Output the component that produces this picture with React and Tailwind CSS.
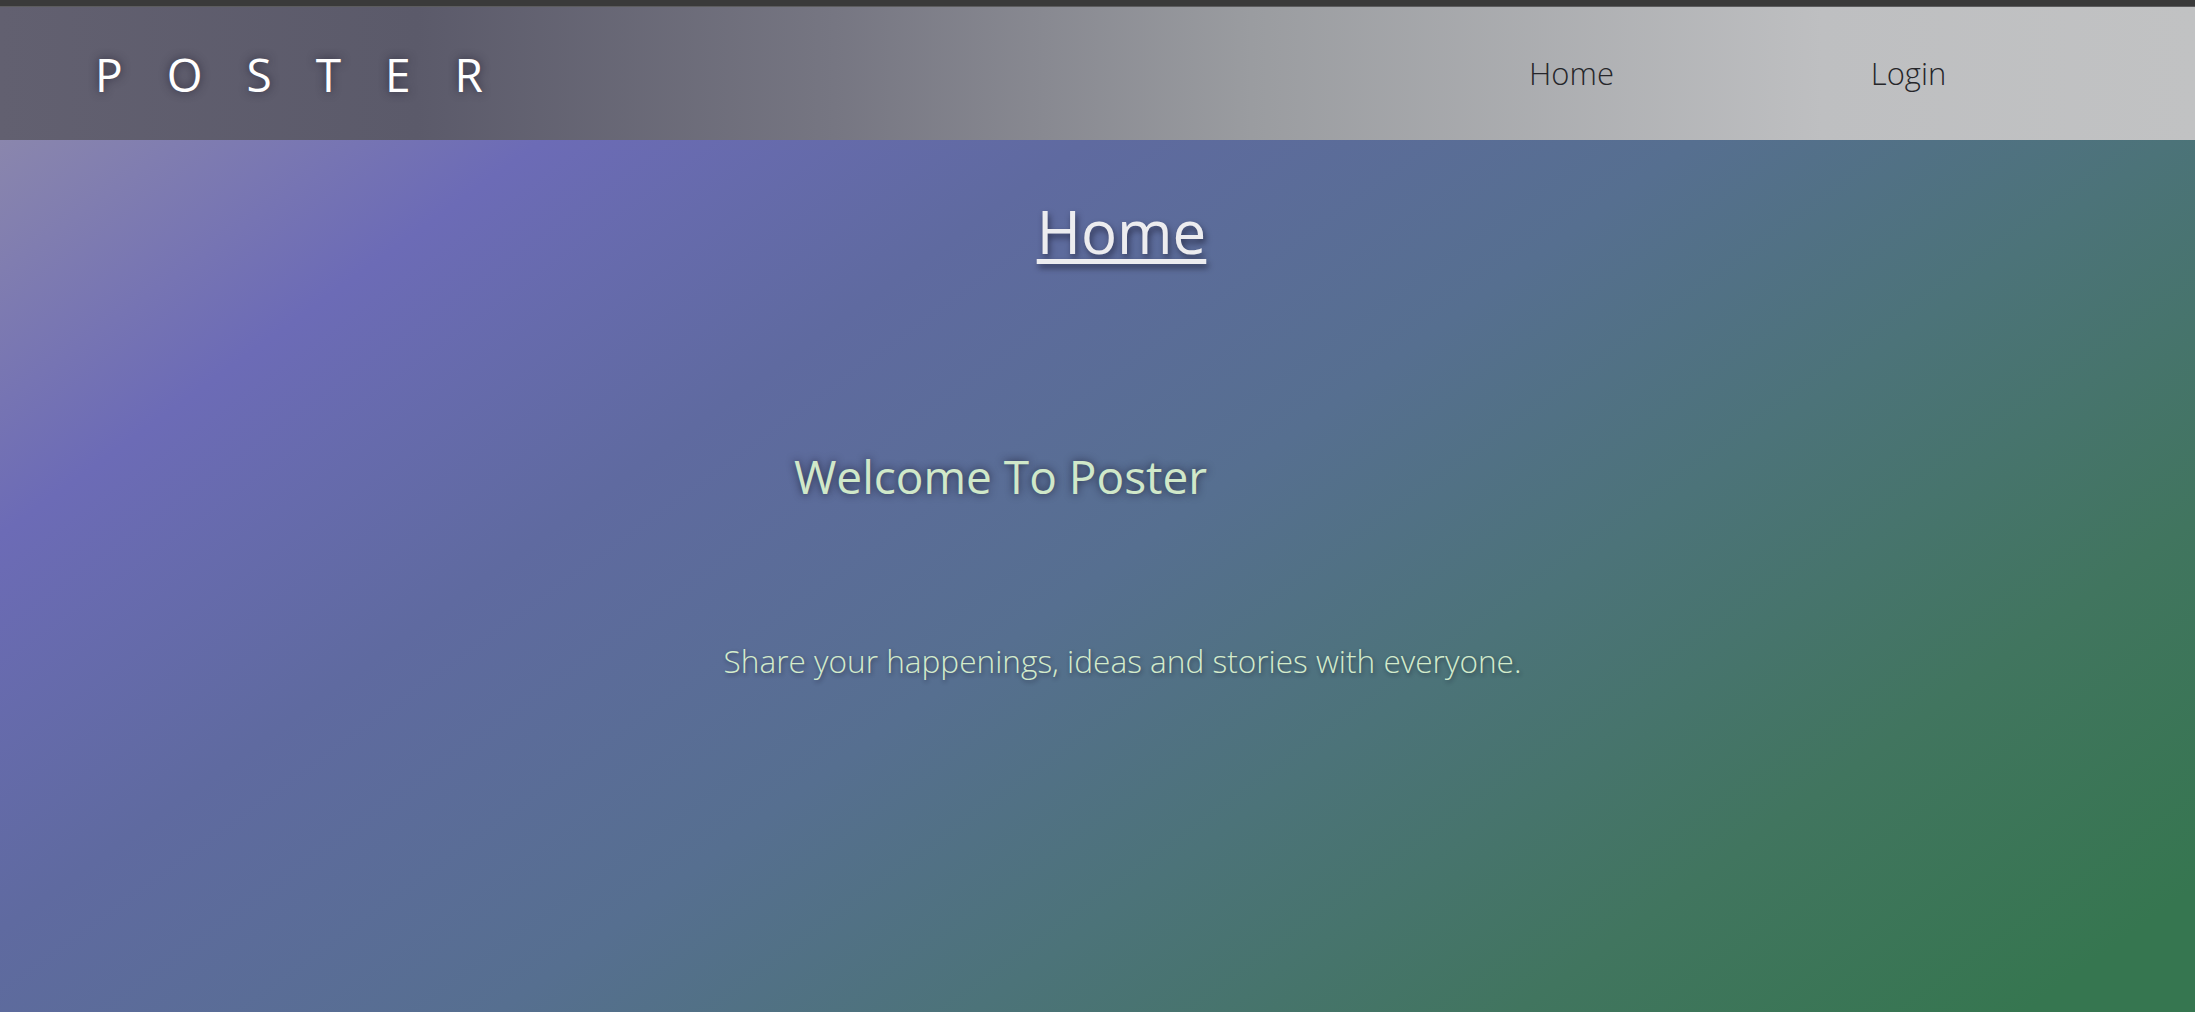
import React from 'react';

// Landing page: header with spaced logo + nav, gradient hero below
export default function App() {
  const navItems = ['Home', 'Login'];

  return (
    <div className="flex min-h-screen flex-col font-['Open_Sans',sans-serif]">
      {/* top strip */}
      <div className="h-[6px] bg-[#3a3a3a]" />
      <div className="h-px bg-[#5c5c5e]" />

      {/* Header */}
      <header className="flex h-[133px] items-center bg-[linear-gradient(to_right,#626070_0%,#5b5a6a_19%,#767682_38%,#9a9ca0_57%,#bebfc1_83%,#c1c2c3_100%)]">
        <div className="pl-[95px] text-[46px] leading-none font-normal tracking-[44px] text-white [text-shadow:0_0_10px_rgba(40,38,56,0.9)]">
          POSTER
        </div>
        <nav className="ml-auto flex pr-[118px]">
          {navItems.map((item) => (
            <a
              key={item}
              href="#"
              className="w-[337px] text-center text-[31px] leading-none font-light text-[#26262a]"
            >
              {item}
            </a>
          ))}
        </nav>
      </header>

      {/* Hero */}
      <main className="flex-1 bg-[linear-gradient(144deg,#8a86ad_0%,#6c6bb6_16%,#5f6aa0_32%,#566f90_50%,#4c7379_64%,#41755f_80%,#367650_95%,#367650_100%)]">
        <h1 className="mt-[61px] pl-[48px] text-center text-[60px] leading-none font-normal text-[#ececef] underline decoration-[5px] underline-offset-[5px] [text-shadow:2px_4px_6px_rgba(20,20,40,0.6)]">
          Home
        </h1>

        <h2 className="mt-[192px] pl-[48px] pr-[242px] text-center text-[46px] leading-none font-normal text-[#d0e8c9] [text-shadow:0_0_8px_rgba(20,20,40,0.75)]">
          Welcome To Poster
        </h2>

        <p className="mt-[146px] pl-[50px] text-center text-[31.6px] leading-none font-light text-[#d3ebcb] [text-shadow:1px_2px_4px_rgba(20,20,40,0.45)]">
          Share your happenings, ideas and stories with everyone.
        </p>
      </main>
    </div>
  );
}
